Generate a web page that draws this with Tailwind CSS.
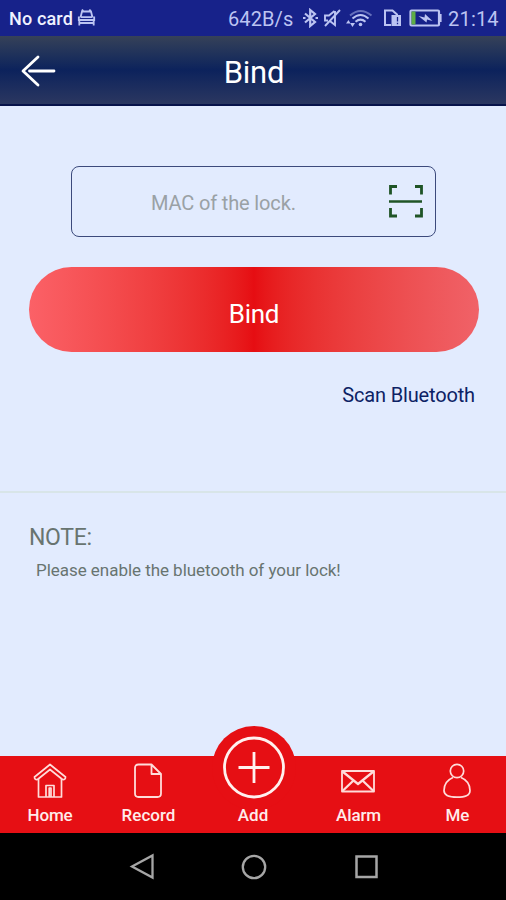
<!DOCTYPE html>
<html lang="en">
<head>
<meta charset="utf-8">
<meta name="viewport" content="width=device-width, initial-scale=1">
<title>Bind</title>
<script src="https://cdn.jsdelivr.net/npm/@tailwindcss/browser@4"></script>
</head>
<body class="w-[506px] h-[900px] overflow-hidden flex flex-col bg-[#e2ebfe] font-[Roboto,sans-serif]">
  <!-- Status bar -->
  <div class="h-9 shrink-0 bg-[#17228a] flex items-center text-[#bcc4f2] whitespace-nowrap">
    <span class="ml-[9px] w-[68px] text-[18px] leading-9 tracking-[0.15px] font-medium text-[#f0f2ff] pt-[2px]">No card</span>
    <svg class="w-[20px] h-[20px]" viewBox="0 0 20 20" fill="none" stroke="currentColor" stroke-width="1.800"><path d="M5 1.500L6.500 3.500M13.500 1.500L12 3.500M3.500 9.500L5 3.500H14L15.500 9.500M1.800 8.500V12H17.200V8.500M4 9.200H15M2.300 12V17.500M16.700 12V17.500M2.300 15H16.700"/></svg>
    <span class="ml-[131px] w-[73px] text-[20px] leading-9 tracking-[0.1px] pt-[2px]">642B/s</span>
    <svg class="w-[17px] h-[20px] ml-[1px]" viewBox="0 0 17 20" fill="none" stroke="currentColor" stroke-width="2.200"><path d="M3 5.500L13 14L8.200 18V2L13 6L3 14.500"/><path d="M1 10h2.500M13.500 10h2.500"/></svg>
    <svg class="w-[19px] h-[20px] ml-[4px]" viewBox="0 0 19 20" fill="none" stroke="currentColor" stroke-width="1.900"><path d="M11.500 3L6 7.500H2V12.500H5M12 3V17L7.500 13.500M17 2L2 18"/></svg>
    <svg class="w-[28px] h-[20px] ml-[4px]" viewBox="0 0 28 20" fill="none" stroke="currentColor" stroke-width="2"><path d="M4 7.500Q14.500-1.500 25.500 7.500" stroke="#6670bc"/><path d="M6.500 10.500Q14.500 3.500 22.500 10.500M9.500 13.800Q14.500 9.500 19.500 13.800"/><circle cx="14.500" cy="16.500" r="1.800" fill="currentColor" stroke="none"/><path d="M0 15.500h4.500L2.500 12ZM4 15h5L6.500 19Z" fill="currentColor" stroke="none"/></svg>
    <svg class="w-[19px] h-[20px] ml-[9px]" viewBox="0 0 19 20" fill="none" stroke="currentColor" stroke-width="2"><path d="M8 17H2V2.500H9.500L14 6.500V8"/><path d="M8.500 7H18V18H8.500Z" fill="currentColor" stroke="none"/><path d="M14.500 9V13.500M14.500 14.800v1.500" stroke="#17228a" stroke-width="1.300"/></svg>
    <svg class="w-[34px] h-[20px] ml-[7px]" viewBox="0 0 34 20" fill="none" stroke="currentColor" stroke-width="2.200"><rect x="1.500" y="2.500" width="28.500" height="15" rx="1"/><path d="M31.500 6V14"/><path d="M2.500 3.500h4v13h-4Z" fill="#5fae45" stroke="none"/><path d="M9.500 8L15.500 9.500L16 6L23.500 13L18 11.500L17.500 14.500Z" fill="currentColor" stroke="none"/></svg>
    <span class="ml-[5px] text-[20px] leading-9 tracking-[0.2px] pt-[2px]">21:14</span>
  </div>

  <!-- Title bar -->
  <header class="h-[70px] shrink-0 grid grid-cols-[80px_1fr_78px] items-center bg-linear-to-b from-[#364158] via-[#0c225c] to-[#2b3760] border-b-2 border-[#07134a]">
    <svg class="w-[38px] h-[34px] ml-[20px] mt-[2px]" viewBox="0 0 38 34" fill="none" stroke="#fff" stroke-width="2.800" stroke-linecap="round" stroke-linejoin="round"><path d="M18 3L3 17L18 31M9.500 17H34"/></svg>
    <h1 class="text-center text-[31px] leading-9 tracking-[-0.3px] text-white pt-[5px]">Bind</h1>
  </header>

  <main class="grow flex flex-col">
    <div class="ml-[71px] mr-[70px] mt-[60px] h-[71px] border border-[#3c4a7c] rounded-[8px] flex items-center">
      <span class="ml-[79px] grow text-[20px] leading-7 tracking-[-0.15px] text-[#9aa1a5] pt-[2px]">MAC of the lock.</span>
      <svg class="w-[36px] h-[36px] mr-[11px] -mt-px" viewBox="0 0 36 36" fill="none" stroke="#1f5426" stroke-width="2.800"><path d="M2.500 11.500V3.500H9M27 3.500H33.500V11.500M2.500 25V33H9M27 33H33.500V25"/><path d="M1 18.500H34" stroke-width="2.300"/></svg>
    </div>
    <div class="ml-[29px] mr-[27px] mt-[30px] h-[85px] rounded-full bg-linear-to-r from-[#fb6167] via-[#e60d12] to-[#f06268] flex items-center justify-center text-white text-[26px] tracking-[-0.3px] pt-[10px]">Bind</div>
    <div class="mt-[28px] mr-[31px] text-right text-[20px] leading-[30px] tracking-[-0.15px] text-[#0d2265]">Scan Bluetooth</div>
    <div class="mt-[81px] h-[2px] bg-[#d8e5e8]"></div>
    <section class="text-[#687470] pl-[29px] pt-[29px]">
      <h2 class="text-[23px] leading-8 tracking-[-0.3px]">NOTE:</h2>
      <p class="pl-[7px] pt-[4px] text-[17px] leading-6 tracking-[-0.04px]">Please enable the bluetooth of your lock!</p>
    </section>
  </main>

  <!-- Tab bar -->
  <nav class="relative h-[77px] shrink-0 bg-[#e60f14] grid grid-cols-[99px_99px_110px_100px_98px] text-[#ffeceb] text-[17px] font-medium leading-5">
    <div class="absolute left-[212px] -top-[30px] size-[84px] rounded-full bg-[#e60f14]"></div>
    <div class="flex flex-col items-center pt-[6px]">
      <svg class="w-[36px] h-[38px]" viewBox="0 0 36 38" fill="none" stroke="#ffdcda" stroke-width="1.700" stroke-linejoin="round"><path d="M18 2.500L2.500 15Q2.500 18 5.500 17.500L18 7.500L30.500 17.500Q33.500 18 33.500 15Z"/><path d="M6.500 17V35H29.500V17"/><path d="M14 35V23.500H22V35M17.200 35V26H19V35"/></svg>
      <span class="mt-[5px] ml-px tracking-[-0.15px]">Home</span>
    </div>
    <div class="flex flex-col items-center pt-[6px]">
      <svg class="w-[30px] h-[38px] -ml-[2px]" viewBox="0 0 30 38" fill="none" stroke="#ffdcda" stroke-width="1.800" stroke-linejoin="round"><path d="M18.500 2.500H5.500Q2 2.500 2 6V31.500Q2 35 5.500 35H24.500Q28 35 28 31.500V12ZM18.500 2.500V12H28"/></svg>
      <span class="mt-[5px]">Record</span>
    </div>
    <div class="relative flex flex-col items-center">
      <svg class="w-[64px] h-[64px] -mt-[20px] ml-[2px]" viewBox="0 0 64 64" fill="none" stroke="#fff1ef" stroke-width="2.800"><circle cx="32" cy="31.500" r="29.500"/><path d="M16.500 31.500H47.500M32 16V47"/></svg>
      <span class="mt-[5px]">Add</span>
    </div>
    <div class="flex flex-col items-center pt-[6px]">
      <svg class="w-[36px] h-[38px]" viewBox="0 0 36 38" fill="none" stroke="#ffdcda" stroke-width="1.800" stroke-linejoin="round"><rect x="2" y="9" width="32" height="20.500"/><path d="M2.500 9.500L18 22L33.500 9.500M2.500 29L13.500 18.500M33.500 29L22.500 18.500" stroke-width="2.300"/></svg>
      <span class="mt-[5px] ml-px tracking-[-0.15px]">Alarm</span>
    </div>
    <div class="flex flex-col items-center pt-[6px]">
      <svg class="w-[30px] h-[38px]" viewBox="0 0 30 38" fill="none" stroke="#ffdcda" stroke-width="1.700"><circle cx="15" cy="9" r="6.700"/><path d="M11 15.500C5 18 2 22.500 2 28.500C2 33.500 7 35.200 15 35.200S28 33.500 28 28.500C28 22.500 25 18 19 15.500"/></svg>
      <span class="mt-[5px] ml-px">Me</span>
    </div>
  </nav>

  <!-- System navigation -->
  <div class="h-[67px] shrink-0 bg-black flex justify-center gap-[84.500px] pt-[20px] pl-[2px]">
    <svg class="size-7" viewBox="0 0 28 28" fill="none" stroke="#a6a6a6" stroke-width="2.300"><path d="M4 13.500L24.500 2.500V24.500Z"/></svg>
    <svg class="size-7" viewBox="0 0 28 28" fill="none" stroke="#a6a6a6" stroke-width="2.300"><circle cx="14" cy="14" r="11.200"/></svg>
    <svg class="size-7" viewBox="0 0 28 28" fill="none" stroke="#a6a6a6" stroke-width="2.500"><rect x="3.500" y="3.500" width="20" height="20.500"/></svg>
  </div>
</body>
</html>
